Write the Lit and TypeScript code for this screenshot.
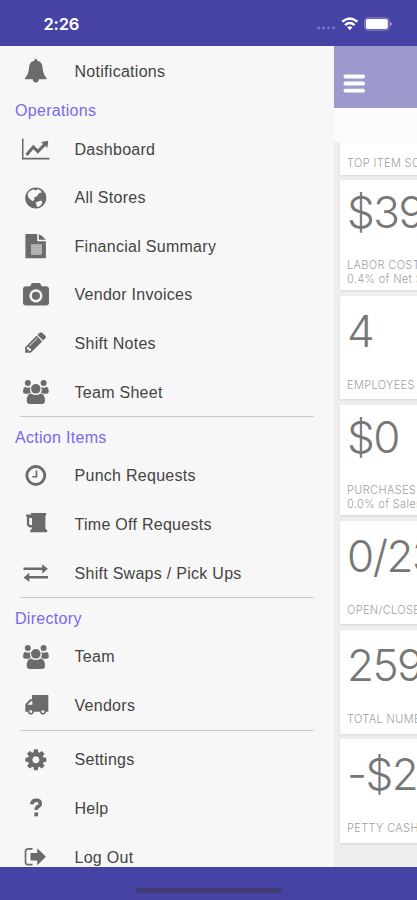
import { LitElement, html, css, svg } from "lit";
import { customElement, property } from "lit/decorators.js";

const team = svg`
  <circle cx="7.800" cy="5" r="3"/><circle cx="23.600" cy="5" r="3"/>
  <path d="M5 8.800q3 1.600 5.600.2-1.600 3 .4 5.600-1.600.4-2.400 1.100H5.400Q3 15.700 3 13.400 3 9.800 5 8.800z"/>
  <path d="M26.800 8.800q-3 1.600-5.600.2 1.600 3-.4 5.600 1.600.4 2.400 1.100h3.200q2.400 0 2.400-2.300 0-3.600-2-4.600z"/>
  <circle cx="15.800" cy="10.800" r="4.800"/>
  <path d="M11 15.400q4.800 3.400 9.600 0 4.200.4 4.400 7.200.1 3.400-3.200 3.400H10q-3.400 0-3.300-3.400.2-6.800 4.300-7.200z"/>`;

const icons: Record<string, unknown> = {
  bell: svg`<path d="M15.800 1.800q1.500 0 1.500 1.900 4.800 1 5.200 6.300.3 7.400 4.100 11v1.200H18.900q-.5 3.200-3.100 3.200t-3.100-3.200H5v-1.200q3.800-3.600 4.100-11 .4-5.300 5.200-6.300 0-1.900 1.500-1.900z"/>`,
  chart: svg`<path d="M2 3.500h1.500v19.300h26v1.600H2z"/><path d="M5.500 18.700l7.700-9 4.700 4.500 5.200-5.200-2-2 7.200-1.300-1 7.400-2-2-7.400 7.600-4.600-4.400-5.700 6.700z"/>`,
  globe: svg`<path fill-rule="evenodd" d="M15.800 3.400a10.600 10.600 0 1 1 0 21.200 10.600 10.600 0 1 1 0-21.200zM13.500 5.300L9 7.500 7.500 10.500 8.700 14l4 3.200 1.800-1.700-.3-2 3-1.600 1.800-2.700 2.700-.8-1-2-3-1.500-1.700 1.700zM21 16.500l-3.300 1.300-2.200.8 1 2 .2 2.200h2.200l2.200-1.800 1.300-2.700z"/>`,
  file: svg`<path fill-rule="evenodd" d="M5.400 2h11.800v7.200h8.700v17H5.400zM11 12h10.500v10.500H11z"/><path d="M18.800 2.200q4.600 1.500 7 5.500h-7z"/><path d="M11 12h10.500v10.500H11z" fill="#aaa"/><path d="M11 14.500h10.500M11 17.200h10.500M11 20h10.500" stroke="#c4c4c4" stroke-width=".8"/>`,
  camera: svg`<path fill-rule="evenodd" d="M6 5.200h4.200l1-2.200q.5-1 1.700-1h6q1.200 0 1.700 1l1 2.200H26q3 0 3 3v13.200q0 3-3 3H6q-3 0-3-3V8.200q0-3 3-3zM15.900 8.200a6.600 6.600 0 1 0 0 13.200 6.600 6.600 0 1 0 0-13.200zM15.900 10.700a4.100 4.100 0 1 1 0 8.200 4.100 4.100 0 1 1 0-8.200z"/>`,
  pencil: svg`<g transform="translate(3.400 1.100) scale(.01367)"><path d="M491 1536l91-91-235-235-91 91v107h128v128h107zm523-928q0-22-22-22-10 0-17 7l-542 542q-7 7-7 17 0 22 22 22 10 0 17-7l542-542q7-7 7-17zm-54-192l416 416-832 832h-416v-416zm683 96q0 53-37 90l-166 166-416-416 166-165q36-38 90-38 53 0 91 38l235 234q37 39 37 91z"/></g>`,
  team,
  clock: svg`<circle cx="15.800" cy="13.500" r="9" fill="none" stroke="#6b6b6b" stroke-width="2.800"/><path d="M15.600 8.400h1.700v7.200h-5v-1.700h3.300z"/>`,
  mug: svg`<path fill-rule="evenodd" d="M6 4.600h5.200l-.5-1.700h15.500v1.700l-.8 1.600v12.400l1.800 1.700v1.900H10.200v-1.900l1.800-1.700v-1.200H9.400L6.900 15.300V6.600H6zM9.200 8v6.200l.8.800h2V8z"/>`,
  swap: svg`<path d="M3.500 8.600h18.700V5.200l5.700 4.600-5.700 4.600v-3.400H3.500z"/><path d="M28 17.100H9.300v-3.300l-5.700 4.600 5.700 4.600v-3.400H28z"/>`,
  truck: svg`<path fill-rule="evenodd" d="M12 4h16.300v16.800h-2.200a3.200 3.200 0 0 1-6.300 0h-5.800a3.200 3.200 0 0 1-6.300 0H5.300v-7.600l4.700-5H12zM11 10.200L7.400 13.800h5v-3.600z"/><circle cx="10.800" cy="20.600" r="2.800"/><circle cx="22.900" cy="20.600" r="2.800"/><circle cx="10.800" cy="20.600" r="1.500" fill="#eee"/><circle cx="22.900" cy="20.600" r="1.500" fill="#eee"/>`,
  cog: svg`<g transform="translate(3.600 1.500) scale(.01367)"><path d="M1152 896q0-106-75-181t-181-75-181 75-75 181 75 181 181 75 181-75 75-181zm512-109v222q0 12-8 23t-20 13l-185 28q-19 54-39 91 35 50 107 138 10 12 10 25t-9 23q-27 37-99 108t-94 71q-12 0-26-9l-138-108q-44 23-91 38-16 136-29 186-7 28-36 28h-222q-14 0-24.500-8.500t-11.500-21.500l-28-184q-49-16-90-37l-141 107q-10 9-25 9-14 0-25-11-126-114-165-168-7-10-7-23 0-12 8-23 15-21 51-66.500t54-70.500q-27-50-41-99l-183-27q-13-2-21-12.500t-8-23.500v-222q0-12 8-23t19-13l186-28q14-46 39-92-40-57-107-138-10-12-10-24 0-10 9-23 26-36 98.500-107.500t94.500-71.500q13 0 26 10l138 107q44-23 91-38 16-136 29-186 7-28 36-28h222q14 0 24.500 8.500t11.500 21.500l28 184q49 16 90 37l142-107q9-9 24-9 13 0 25 10 129 119 165 170 7 8 7 22 0 12-8 23-15 21-51 66.500t-54 70.500q26 50 41 98l183 28q13 2 21 12.500t8 23.500z"/></g>`,
  help: svg`<path d="M11.700 10.200q.7-4 4.600-4 4 0 4 3.200 0 2-2.200 3.200-1.900 1-1.900 3.300" fill="none" stroke="#6b6b6b" stroke-width="3.500"/><path d="M14.300 18.500h3.800v3.800h-3.800z"/>`,
  logout: svg`<path d="M12.500 5.900H8.200q-2.700 0-2.700 2.700v10.300q0 2.700 2.700 2.700h4.300" fill="none" stroke="#6b6b6b" stroke-width="1.700"/><path d="M10.500 10h6.700V5.300l8.700 8.400-8.700 8.500v-4.800h-6.700z"/>`,
};

interface Group { title?: string; items: [icon: string, label: string][]; }

const groups: Group[] = [
  { items: [["bell", "Notifications"]] },
  {
    title: "Operations",
    items: [
      ["chart", "Dashboard"], ["globe", "All Stores"], ["file", "Financial Summary"],
      ["camera", "Vendor Invoices"], ["pencil", "Shift Notes"], ["team", "Team Sheet"],
    ],
  },
  { title: "Action Items", items: [["clock", "Punch Requests"], ["mug", "Time Off Requests"], ["swap", "Shift Swaps / Pick Ups"]] },
  { title: "Directory", items: [["team", "Team"], ["truck", "Vendors"]] },
  { items: [["cog", "Settings"], ["help", "Help"], ["logout", "Log Out"]] },
];

@customElement("menu-item")
class MenuItem extends LitElement {
  @property() icon = "";
  @property() label = "";
  static styles = css`
    :host { display: flex; align-items: center; height: 48.600px; flex: none; padding-left: 20px; }
    svg { width: 32px; height: 28px; fill: #6b6b6b; flex: none; }
    .label { margin-left: 22.500px; padding-top: 1.400px; font-size: 16px; letter-spacing: .28px; line-height: 20px; white-space: nowrap; color: #444; }
  `;
  render() {
    return html`<svg viewBox="0 0 32 28">${icons[this.icon]}</svg><span class="label">${this.label}</span>`;
  }
}

@customElement("stat-card")
class StatCard extends LitElement {
  @property() value = "";
  @property() label = "";
  @property() note = "";
  static styles = css`
    :host { display: flex; flex-direction: column; box-sizing: border-box; width: 160px; height: 103.700px; flex: none; padding: 9.500px 0 0 7.500px; background: #fff; box-shadow: 0 1px 2px #d6d6d6; white-space: nowrap; font-family: Inter, sans-serif; }
    :host([note]) { height: 110.500px; padding-top: 6px; }
    .value { font-size: 44px; font-weight: 300; line-height: 52px; height: 72.500px; flex: none; color: #777; letter-spacing: -1.500px; }
    .label, .note { font-size: 11px; line-height: 14px; font-weight: 300; color: #a0a0a0; letter-spacing: .35px; }
  `;
  render() {
    return html`<div class="value">${this.value}</div><div class="label">${this.label}</div>
      ${this.note ? html`<div class="note">${this.note}</div>` : ""}`;
  }
}

@customElement("app-root")
class AppRoot extends LitElement {
  static styles = css`
    :host { display: flex; flex-direction: column; width: 417px; height: 900px; overflow: hidden; background: #4743a5; font-family: "Liberation Sans", Arial, sans-serif; }
    .status { height: 46px; flex: none; display: flex; align-items: center; box-sizing: border-box; padding: 2px 24px 0 43.500px; color: #fff; }
    .time { flex: 1; font: 600 16.500px/20px Inter, sans-serif; letter-spacing: -.2px; }
    .status svg { width: 76px; height: 20px; }
    .body { height: 821px; flex: none; display: flex; overflow: hidden; }
    .drawer { width: 334px; flex: none; background: #f7f7f7; box-sizing: border-box; padding-top: .7px; display: flex; flex-direction: column; overflow: hidden; }
    .title { height: 29.400px; flex: none; line-height: 31.500px; padding-left: 15px; font-size: 16px; letter-spacing: .3px; color: #7869f0; }
    .rule { height: 5.800px; flex: none; box-sizing: border-box; margin: 0 20px; border-top: 1px solid #c9c9c9; }
    .page { flex: 1; min-width: 0; background: #eee; display: flex; flex-direction: column; overflow: hidden; }
    .bar { height: 61.500px; flex: none; background: #9c99cc; }
    .bar svg { width: 40px; height: 62px; display: block; }
    .gap { height: 34.500px; flex: none; background: #fcfcfc; }
    .cards { display: flex; flex-direction: column; gap: 5.400px; padding-left: 5.500px; }
    .first { height: 32.500px; width: 160px; flex: none; box-sizing: border-box; padding: 14px 0 0 7.500px; background: #fff; box-shadow: 0 1px 2px #d6d6d6; font: 300 11px/14px Inter, sans-serif; letter-spacing: .35px; color: #a0a0a0; white-space: nowrap; }
    .foot { flex: 1; display: flex; justify-content: center; align-items: center; padding-top: 13px; box-sizing: border-box; }
    .home { width: 147px; height: 5px; border-radius: 3px; background: #433c70; }
  `;
  render() {
    return html`
      <div class="status">
        <span class="time">2:26</span>
        <svg viewBox="0 0 76 20">
          <g fill="#7572c0"><rect x="0" y="12.500" width="3.200" height="2.800" rx="1"/><rect x="5" y="12.500" width="3.200" height="2.800" rx="1"/><rect x="10" y="12.500" width="3.200" height="2.800" rx="1"/><rect x="15" y="12.500" width="3.200" height="2.800" rx="1"/></g>
          <g fill="none" stroke="#fff" stroke-width="2.400"><path d="M25.200 7.600q7.600-6.400 15.200 0"/><path d="M28 11.100q4.800-4 9.600 0"/></g>
          <path d="M30.200 13.200q2.600-2 5.200 0l-2.600 3z" fill="#fff"/>
          <rect x="47.700" y="3.900" width="24.200" height="12.200" rx="3.200" fill="none" stroke="#8f8dcc"/><rect x="48.800" y="5" width="22" height="10" rx="2" fill="#fff"/><path d="M73.200 8v4q1.700-.6 1.700-2t-1.700-2z" fill="#aaa8da"/>
        </svg>
      </div>
      <div class="body">
        <nav class="drawer">
          ${groups.map((g, i) => html`
            ${i > 1 ? html`<div class="rule"></div>` : ""}
            ${g.title ? html`<div class="title">${g.title}</div>` : ""}
            ${g.items.map(([icon, label]) => html`<menu-item .icon=${icon} .label=${label}></menu-item>`)}`)}
        </nav>
        <main class="page">
          <div class="bar"><svg viewBox="0 0 40 62" stroke="#fff" stroke-width="3.800" stroke-linecap="round"><path d="M11.400 30.500h17.700M11.400 37.500h17.700M11.400 44.700h17.700"/></svg></div>
          <div class="gap"></div>
          <div class="cards">
            <div class="first">TOP ITEM SOLD</div>
            <stat-card value="$39.20" label="LABOR COST" note="0.4% of Net Sales"></stat-card>
            <stat-card value="4" label="EMPLOYEES"></stat-card>
            <stat-card value="$0" label="PURCHASES" note="0.0% of Sales"></stat-card>
            <stat-card value="0/23" label="OPEN/CLOSED"></stat-card>
            <stat-card value="259" label="TOTAL NUMBER"></stat-card>
            <stat-card value="-$20" label="PETTY CASH"></stat-card>
          </div>
        </main>
      </div>
      <div class="foot"><div class="home"></div></div>`;
  }
}
